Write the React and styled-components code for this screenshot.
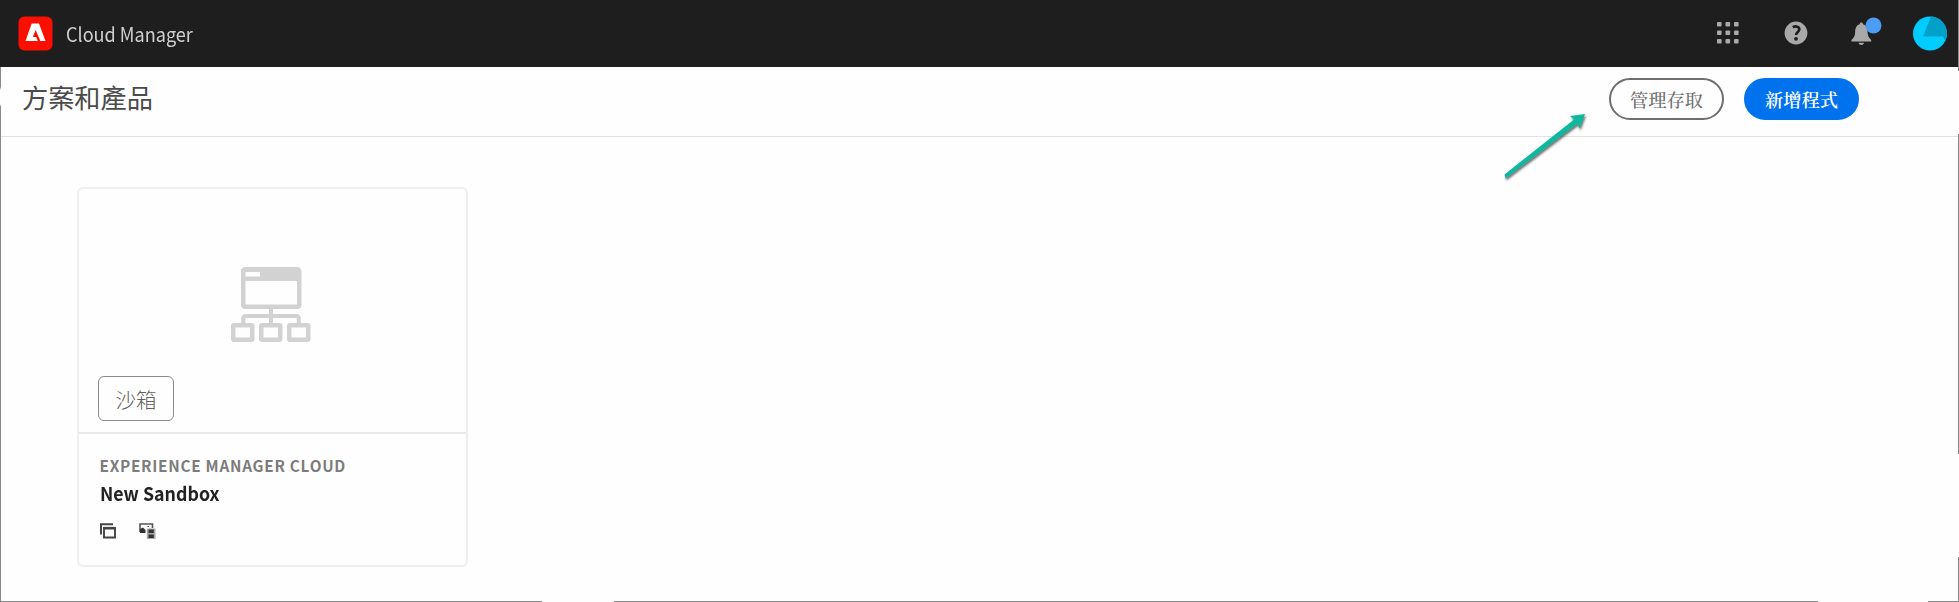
import React from "react";
import styled, { createGlobalStyle } from "styled-components";

const GlobalStyle = createGlobalStyle`
  *, *::before, *::after { box-sizing: border-box; }
  body { margin: 0; background: #fefefe; }
`;

const uiFont = `"Noto Sans CJK TC", "Noto Sans", sans-serif`;

const Page = styled.div`
  position: relative;
  display: flex;
  flex-direction: column;
  width: 100%;
  height: 602px;
  overflow: hidden;
  background: #fefefe;
  font-family: ${uiFont};
  color: #4b4b4b;
`;

const FrameLine = styled.div`
  position: absolute;
  pointer-events: none;
  ${({ $side }) =>
    $side === "bottom"
      ? "left: 0; right: 0; bottom: 0; height: 1px;"
      : `top: 0; bottom: 0; width: 1px; ${$side}: 0;`}
  background: ${({ $fill }) => $fill};
`;

const TopBar = styled.header`
  display: flex;
  align-items: center;
  justify-content: space-between;
  height: 67px;
  flex: none;
  padding: 0 11px 0 18px;
  background: #1e1e1e;
`;

const Brand = styled.div`
  display: flex;
  align-items: center;
  gap: 13px;
`;

const BrandName = styled.span`
  font-size: 19.5px;
  line-height: 30px;
  color: #d0d0d0;
  transform: scaleX(0.927);
  transform-origin: left center;
`;

const Actions = styled.div`
  display: flex;
  align-items: center;
`;

const IconButton = styled.button`
  display: flex;
  flex: none;
  padding: 0 0 ${({ $lift }) => $lift || 0}px;
  border: 0;
  background: none;
  margin-left: ${({ $gap }) => $gap || 0}px;
`;

const TitleBar = styled.div`
  display: flex;
  flex: none;
  align-items: flex-start;
  justify-content: space-between;
  height: 70px;
  padding: 11px 100px 0 22px;
  border-bottom: 1px solid #e2e2e2;
`;

const Title = styled.h1`
  margin: 0;
  font-size: 26.2px;
  line-height: 38px;
  font-weight: 400;
  color: #4b4b4b;
`;

const ButtonGroup = styled.div`
  display: flex;
  gap: 20px;
`;

const PillButton = styled.button`
  display: flex;
  align-items: center;
  justify-content: center;
  width: 115px;
  height: 42px;
  padding: 0;
  border: 2px solid ${({ $primary }) => ($primary ? "#0072ee" : "#6e6e6e")};
  border-radius: 21px;
  background: ${({ $primary }) => ($primary ? "#0072ee" : "#fefefe")};
  color: ${({ $primary }) => ($primary ? "#fff" : "#6e6e6e")};
  font: ${({ $primary }) => ($primary ? 600 : 500)} 18.3px/26px "Noto Serif CJK TC", ${uiFont};
`;

const Pointer = styled.svg`
  position: absolute;
  left: 1495px;
  top: 106px;
`;

const Main = styled.main`
  flex: 1;
  padding: 50px 77px 0;
`;

const Card = styled.article`
  width: 391px;
  height: 380px;
  border: 2px solid #efefef;
  border-radius: 6px;
`;

const Preview = styled.div`
  display: flex;
  flex-direction: column;
  justify-content: flex-end;
  height: 245px;
  padding: 0 19px 11px;
  border-bottom: 2px solid #e8e8e8;
`;

const PreviewArt = styled.div`
  display: flex;
  padding-left: 133px;
`;

const Tag = styled.span`
  align-self: flex-start;
  width: 76px;
  height: 45px;
  margin-top: 34px;
  border: 1px solid #8a8a8a;
  border-radius: 6px;
  text-align: center;
  font-size: 20.5px;
  font-weight: 300;
  line-height: 45px;
  color: #606060;
`;

const Details = styled.div`
  display: flex;
  flex-direction: column;
  align-items: flex-start;
  padding: 19px 20.5px 0;
`;

const Eyebrow = styled.span`
  font-size: 15.3px;
  line-height: 24px;
  font-weight: 700;
  letter-spacing: 0.75px;
  color: #7c7c7c;
`;

const ProgramName = styled.span`
  margin-top: 3px;
  font-size: 19px;
  line-height: 26px;
  font-weight: 700;
  color: #222;
  transform: scaleX(0.936);
  transform-origin: left center;
`;

const IconRow = styled.div`
  display: flex;
  gap: 22px;
  margin-top: 17px;
`;

const Logo = () => (
  <svg width="35" height="35" viewBox="0 0 35 35">
    <rect x=".5" y=".5" width="34" height="34" rx="6" fill="#fa0f00" />
    <path fill="#fff" d="M13.700 7.500h7.300L27.500 25h-5.100l-4.700-11-2.900 7h3.400l1.600 4H7.500z" />
  </svg>
);

const AppsIcon = () => (
  <svg width="22" height="22" viewBox="0 0 22 22" fill="#a9a9a9">
    {[0, 8.5, 17].map((y) =>
      [0, 8.5, 17].map((x) => <rect key={`${x}-${y}`} x={x} y={y} width="4.6" height="4.6" rx=".8" />)
    )}
  </svg>
);

const HelpIcon = () => (
  <svg width="24" height="24" viewBox="0 0 24 24">
    <circle cx="12" cy="12" r="11.4" fill="#a9a9a9" />
    <path d="M8.8 6.3c3.2-1.7 6.5-.6 6.5 2 0 2.4-3.2 2.9-3.2 5.6" fill="none" stroke="#1e1e1e" strokeWidth="2.7" />
    <circle cx="12" cy="17.8" r="1.9" fill="#1e1e1e" />
  </svg>
);

const BellIcon = () => (
  <svg width="32" height="30" viewBox="0 0 32 30">
    <path
      fill="#a9a9a9"
      d="M8.700 7.200C8.700 5 12 5 12 7.200c3.500 1 4.400 4 4.500 7.600.1 4 1.300 6 3.700 8.300v1.500H.5v-1.500C3 20.800 4.100 18.800 4.200 14.800c.1-3.600 1-6.600 4.500-7.600zM7.600 25.800h5.400c-.4 3-5 3-5.400 0z"
    />
    <circle cx="22.500" cy="8.500" r="8" fill="#4b9cf5" />
  </svg>
);

const Avatar = () => (
  <svg width="35" height="35" viewBox="0 0 35 35">
    <defs>
      <clipPath id="avatar-clip">
        <circle cx="17" cy="17.5" r="17" />
      </clipPath>
    </defs>
    <g clipPath="url(#avatar-clip)">
      <rect width="35" height="35" fill="#00ccff" />
      <path d="M18 0 10 20.5h20l2 4H35V0z" fill="#00a0c8" />
    </g>
  </svg>
);

const SitemapIcon = () => (
  <svg width="80" height="75" viewBox="0 0 80 75" fill="none" stroke="#d2d2d2" strokeWidth="4.5">
    <rect x="12.25" y="2.25" width="56" height="37.5" rx="2" />
    <path d="M10.5 2h59v12h-59z" fill="#d2d2d2" stroke="none" />
    <path d="M14.5 5h14.5v4.5H14.5z" fill="#fefefe" stroke="none" />
    <path d="M40 41v17M12.25 57v-5.5q0-2.5 2.5-2.5h50.5q2.5 0 2.5 2.5V57" strokeWidth="4" />
    <rect x="2.25" y="58.25" width="19" height="14.5" rx="1" />
    <rect x="30.25" y="58.25" width="19" height="14.5" rx="1" />
    <rect x="58.25" y="58.25" width="19" height="14.5" rx="1" />
  </svg>
);

const CopiesIcon = () => (
  <svg width="17" height="16" viewBox="0 0 17 16" fill="none" stroke="#444">
    <path d="M1 11.500V1.200h12" strokeWidth="2" />
    <path d="M4 5h11v9.500H4z" strokeWidth="1.900" />
    <path d="M3.100 5.200h12.800" strokeWidth="2.600" />
  </svg>
);

const AssetsIcon = () => (
  <svg width="17" height="16" viewBox="0 0 17 16">
    <path d="M1 9V1h12.5v4" fill="none" stroke="#555" strokeWidth="1.6" />
    <path d="M1 6l3-1.500L6.500 7v3H1z" fill="#333" />
    <path d="M7.800 5.500H16.500v10.500H7.800z" fill="#aaa" />
    <path d="M9.500 6.500h5.300v3.500H9.500zM9.500 11.500h5.300v3.500H9.500z" fill="#333" />
    <path d="M8.500 3.500h1.500" stroke="#555" />
  </svg>
);

const frameColor = "#888";

export default function App() {
  return (
    <Page>
      <GlobalStyle />
      <TopBar>
        <Brand>
          <Logo />
          <BrandName>Cloud Manager</BrandName>
        </Brand>
        <Actions>
          <IconButton aria-label="Apps" $lift={2}><AppsIcon /></IconButton>
          <IconButton aria-label="Help" $gap={45} $lift={1}><HelpIcon /></IconButton>
          <IconButton aria-label="Notifications" $gap={43} $lift={4}><BellIcon /></IconButton>
          <IconButton aria-label="Account" $gap={30}><Avatar /></IconButton>
        </Actions>
      </TopBar>
      <TitleBar>
        <Title>方案和產品</Title>
        <ButtonGroup>
          <PillButton>管理存取</PillButton>
          <PillButton $primary>新增程式</PillButton>
        </ButtonGroup>
      </TitleBar>
      <Main>
        <Card>
          <Preview>
            <PreviewArt>
              <SitemapIcon />
            </PreviewArt>
            <Tag>沙箱</Tag>
          </Preview>
          <Details>
            <Eyebrow>EXPERIENCE MANAGER CLOUD</Eyebrow>
            <ProgramName>New Sandbox</ProgramName>
            <IconRow>
              <CopiesIcon />
              <AssetsIcon />
            </IconRow>
          </Details>
        </Card>
      </Main>
      <Pointer width="96" height="80" viewBox="0 0 96 80">
        <defs>
          <filter id="pointer-shadow" x="-20%" y="-20%" width="140%" height="140%">
            <feDropShadow dx="1" dy="2" stdDeviation="1" floodColor="#333" floodOpacity=".7" />
          </filter>
        </defs>
        <path
          filter="url(#pointer-shadow)"
          fill="#0fb89e"
          d="M90 8 84.500 22.500l-2.200-4.800L10.500 72.500 9.500 68.500 79 13.500 75 10z"
        />
      </Pointer>
      <FrameLine
        $side="left"
        $fill={`linear-gradient(transparent 67px, ${frameColor} 67px 87px, transparent 90px 104px, ${frameColor} 107px)`}
      />
      <FrameLine
        $side="right"
        $fill={`linear-gradient(${frameColor} 71px, transparent 71px 134px, ${frameColor} 134px 454px, transparent 454px 557px, ${frameColor} 557px)`}
      />
      <FrameLine
        $side="bottom"
        $fill={`linear-gradient(90deg, ${frameColor} 542px, transparent 542px 614px, ${frameColor} 614px 1818px, transparent 1818px 1928px, ${frameColor} 1928px)`}
      />
    </Page>
  );
}
